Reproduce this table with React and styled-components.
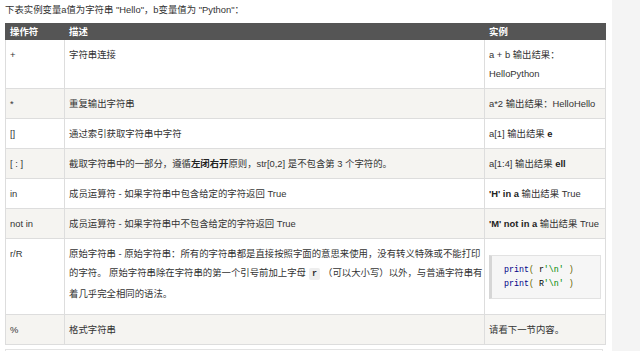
import React from 'react'
import styled, { createGlobalStyle } from 'styled-components'

const GlobalStyle = createGlobalStyle`
  html, body {
    margin: 0;
    padding: 0;
    background: #ffffff;
  }
  body {
    font-family: 'Liberation Sans', 'Noto Sans CJK SC', sans-serif;
    color: #333333;
  }
`

const Page = styled.div`
  display: flex;
  width: 640px;
  height: 351px;
  overflow: hidden;
`
const Main = styled.div`
  width: 607px;
  padding-left: 5px;
  background: #ffffff;
`
const Side = styled.div`
  flex: 1;
  background: #f4f4f4;
`
const Intro = styled.p`
  margin: 0 0 3px;
  font-size: 9.4px;
  line-height: 20px;
  color: #333;
`
const Table = styled.table`
  width: 600px;
  table-layout: fixed;
  border-collapse: collapse;
  font-size: 9.4px;
  border: 1px solid #dddddd;
`
const Col = styled.col`
  width: ${(p) => p.$w}px;
`
const HeadCell = styled.th`
  background: #555555;
  color: #ffffff;
  font-weight: bold;
  text-align: left;
  height: 15px;
  line-height: 15px;
  padding: 0 4px;
  border: 1px solid #555555;
`
const Row = styled.tr`
  background: ${(p) => (p.$alt ? '#f5f4f1' : '#ffffff')};
`
const Cell = styled.td`
  border: 1px solid #dddddd;
  padding: 5px 4px;
  line-height: 19px;
  vertical-align: top;
  white-space: ${(p) => (p.$nowrap ? 'nowrap' : 'normal')};
`
const B = styled.b`
  font-weight: bold;
  color: #222;
`
const InlineCode = styled.code`
  font-family: 'Liberation Mono', monospace;
  font-size: 8.4px;
  font-weight: bold;
  background: #eeeeee;
  border-radius: 2px;
  padding: 1px 3px;
  margin: 0 3px;
`
const CodeBlock = styled.pre`
  margin: 11px 0 10px;
  padding: 7px 12px;
  background: #f6f6f6;
  border: 1px solid #e2e2e2;
  border-left: 3px solid #d6d6d6;
  font-family: 'Liberation Mono', monospace;
  font-size: 8.3px;
  line-height: 14px;
  color: #000;
`
const Kwd = styled.span`
  color: #000088;
`
const Pun = styled.span`
  color: #666600;
`
const Str = styled.span`
  color: #008800;
`
const NextBox = styled.div`
  margin-top: 4px;
  width: 596px;
  height: 20px;
  border: 1px solid #e3e3e3;
`

function CodeLine({ prefix }) {
  return (
    <div>
      <Kwd>print</Kwd>
      <Pun>( </Pun>
      {prefix}
      <Str>'\n'</Str>
      <Pun> )</Pun>
    </div>
  )
}

export default function App() {
  return (
    <>
      <GlobalStyle />
      <Page>
        <Main>
          <Intro>下表实例变量a值为字符串 "Hello"，b变量值为 "Python"：</Intro>
          <Table>
            <colgroup>
              <Col $w={59} />
              <Col $w={420} />
              <Col $w={121} />
            </colgroup>
            <thead>
              <tr>
                <HeadCell>操作符</HeadCell>
                <HeadCell>描述</HeadCell>
                <HeadCell>实例</HeadCell>
              </tr>
            </thead>
            <tbody>
              <Row>
                <Cell>+</Cell>
                <Cell>字符串连接</Cell>
                <Cell>
                  a + b 输出结果：
                  <br />
                  HelloPython
                </Cell>
              </Row>
              <Row $alt>
                <Cell>*</Cell>
                <Cell>重复输出字符串</Cell>
                <Cell $nowrap>a*2 输出结果：HelloHello</Cell>
              </Row>
              <Row>
                <Cell>[]</Cell>
                <Cell>通过索引获取字符串中字符</Cell>
                <Cell>
                  a[1] 输出结果 <B>e</B>
                </Cell>
              </Row>
              <Row $alt>
                <Cell>[ : ]</Cell>
                <Cell>
                  截取字符串中的一部分，遵循<B>左闭右开</B>原则，str[0,2] 是不包含第 3 个字符的。
                </Cell>
                <Cell>
                  a[1:4] 输出结果 <B>ell</B>
                </Cell>
              </Row>
              <Row>
                <Cell>in</Cell>
                <Cell>成员运算符 - 如果字符串中包含给定的字符返回 True</Cell>
                <Cell $nowrap>
                  <B>'H' in a</B> 输出结果 True
                </Cell>
              </Row>
              <Row $alt>
                <Cell>not in</Cell>
                <Cell>成员运算符 - 如果字符串中不包含给定的字符返回 True</Cell>
                <Cell $nowrap>
                  <B>'M' not in a</B> 输出结果 True
                </Cell>
              </Row>
              <Row>
                <Cell>r/R</Cell>
                <Cell $nowrap>
                  原始字符串 - 原始字符串：所有的字符串都是直接按照字面的意思来使用，没有转义特殊或不能打印
                  <br />
                  的字符。 原始字符串除在字符串的第一个引号前加上字母<InlineCode>r</InlineCode>（可以大小写）以外，与普通字符串有
                  <br />
                  着几乎完全相同的语法。
                </Cell>
                <Cell>
                  <CodeBlock>
                    <CodeLine prefix="r" />
                    <CodeLine prefix="R" />
                  </CodeBlock>
                </Cell>
              </Row>
              <Row $alt>
                <Cell>%</Cell>
                <Cell>格式字符串</Cell>
                <Cell>请看下一节内容。</Cell>
              </Row>
            </tbody>
          </Table>
          <NextBox />
        </Main>
        <Side />
      </Page>
    </>
  )
}
